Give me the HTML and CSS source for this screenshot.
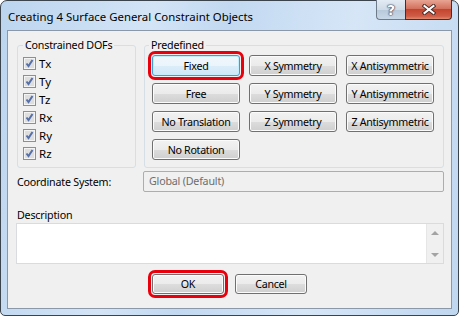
FILE: index.html
```html
<!DOCTYPE html>
<html lang="en">
<head>
  <meta charset="UTF-8" />
  <title>Creating 4 Surface General Constraint Objects</title>
  <link rel="stylesheet" href="styles.css">
</head>
<body>
  <div class="window">
    <div class="titlebar">
      <span class="title">Creating 4 Surface General Constraint Objects</span>
      <div class="caption">
        <span class="cap-btn help">?</span>
        <span class="cap-btn close">
          <svg width="14" height="11" viewBox="0 0 14 11">
            <path d="M2.5 2 L11.5 9 M11.5 2 L2.5 9" stroke="#4a2b28" stroke-width="4" stroke-linecap="square" />
            <path d="M2.5 2 L11.5 9 M11.5 2 L2.5 9" stroke="#fff" stroke-width="2" stroke-linecap="square" />
          </svg>
        </span>
      </div>
    </div>

    <div class="client">
      <div class="groups">
        <fieldset class="group dofs">
          <legend>Constrained DOFs</legend>
          <div class="dof-list">
            <label class="check"><span class="box"></span>Tx</label>
            <label class="check"><span class="box"></span>Ty</label>
            <label class="check"><span class="box"></span>Tz</label>
            <label class="check"><span class="box"></span>Rx</label>
            <label class="check"><span class="box"></span>Ry</label>
            <label class="check"><span class="box"></span>Rz</label>
          </div>
        </fieldset>

        <fieldset class="group predefined">
          <legend>Predefined</legend>
          <div class="btn-grid">
            <button class="btn focused marked">Fixed</button>
            <button class="btn">X Symmetry</button>
            <button class="btn">X Antisymmetric</button>
            <button class="btn">Free</button>
            <button class="btn">Y Symmetry</button>
            <button class="btn">Y Antisymmetric</button>
            <button class="btn">No Translation</button>
            <button class="btn">Z Symmetry</button>
            <button class="btn">Z Antisymmetric</button>
            <button class="btn">No Rotation</button>
          </div>
        </fieldset>
      </div>

      <div class="field-row">
        <span class="field-label">Coordinate System:</span>
        <div class="combo">Global (Default)</div>
      </div>

      <div class="desc-label">Description</div>
      <div class="memo">
        <div class="memo-text"></div>
        <div class="scrollbar">
          <span class="arrow up"></span>
          <span class="arrow down"></span>
        </div>
      </div>

      <div class="actions">
        <button class="btn action marked">OK</button>
        <button class="btn action">Cancel</button>
      </div>
    </div>
  </div>
</body>
</html>
```

FILE: styles.css
```css
* {
  box-sizing: border-box;
}

body {
  margin: 0;
  background: #ffffff;
  font-family: 'Noto Sans', sans-serif;
  font-size: 10.7px;
  color: #000;
}

.window {
  width: 459px;
  height: 316px;
  border: 1px solid #3b434c;
  border-radius: 7px 7px 5px 5px;
  background: linear-gradient(100deg, #bcd5ef 0%, #d3e4f6 30%, #c2d9f1 45%, #d6e6f7 70%, #c0d7f0 100%);
  padding: 0 6px 6px 6px;
  display: flex;
  flex-direction: column;
}

.titlebar {
  height: 29px;
  display: flex;
  justify-content: space-between;
  align-items: flex-start;
}

.title {
  padding: 9px 0 0 1px;
  font-size: 11.4px;
  line-height: 14px;
  color: #000;
}

.caption {
  display: flex;
  margin-top: -1px;
}

.cap-btn {
  height: 20px;
  display: flex;
  align-items: center;
  justify-content: center;
  border: 1px solid #6f7a88;
  border-top: none;
}

.help {
  width: 29px;
  border-radius: 0 0 0 4px;
  border-right: none;
  background: linear-gradient(#e3ebf4 0%, #cfdbe8 50%, #b7c8da 51%, #c9d8e8 100%);
  color: #ffffff;
  font-family: 'DejaVu Sans', sans-serif;
  font-weight: bold;
  font-size: 14px;
  text-shadow: 0 0 1px #2d3c50, 0 0 1px #2d3c50, 0 0 2px #2d3c50;
}

.close {
  width: 47px;
  border-radius: 0 0 4px 0;
  border-color: #4c2a26;
  background: linear-gradient(#e8a493 0%, #d4715d 45%, #c3452f 50%, #cf5c45 85%, #e08b6f 100%);
}

.client {
  flex: 1;
  background: #f0f0f0;
  border: 1px solid #8a98a9;
  padding: 7px 7px 0 9px;
  letter-spacing: -0.2px;
}

.groups {
  display: flex;
  gap: 8px;
}

.group {
  margin: 0;
  padding: 0;
  border: 1px solid #d5dfe5;
  border-radius: 3px;
  min-width: 0;
}

.group legend {
  padding: 0 2px;
  margin-left: 5px;
  line-height: 15px;
}

.dofs {
  width: 119px;
}

.dof-list {
  padding: 1px 0 0 5px;
}

.predefined {
  width: 300px;
}

.predefined legend {
  margin-left: 4px;
}

.check {
  display: flex;
  align-items: center;
  height: 18px;
  gap: 3px;
  font-size: 11.5px;
  letter-spacing: 0;
}

.box {
  width: 13px;
  height: 13px;
  border: 1px solid #8f8f8f;
  background: #dedede url("data:image/svg+xml;utf8,<svg xmlns='http://www.w3.org/2000/svg' width='11' height='11'><path d='M2.5 5.5 L4.5 8 L8.5 2' fill='none' stroke='%23556fa8' stroke-width='2'/></svg>") no-repeat center;
  box-shadow: inset 0 0 0 1px #f4f4f4;
}

.btn-grid {
  display: grid;
  grid-template-columns: repeat(3, 88px);
  column-gap: 9px;
  row-gap: 7px;
  padding: 2px 7px 7px 7px;
}

.btn {
  height: 21px;
  padding: 0;
  white-space: nowrap;
  font-family: inherit;
  font-size: 10.7px;
  letter-spacing: -0.3px;
  color: #000;
  border: 1px solid #707070;
  border-radius: 3px;
  background: linear-gradient(#f2f2f2 0%, #ebebeb 50%, #dddddd 51%, #cfcfcf 100%);
  box-shadow: inset 0 0 0 1px #fbfbfb;
}

.btn.focused {
  border-color: #3c9ed6;
  box-shadow: inset 0 0 0 1px #c3ecfc;
  background: linear-gradient(#f2f8fc 0%, #eaf4fb 50%, #dbedf9 51%, #d0e7f7 100%);
}

.marked {
  outline: 3px solid #e8000c;
  outline-offset: 1px;
}

.field-row {
  display: flex;
  align-items: center;
  justify-content: space-between;
  margin-top: 3px;
}

.combo {
  width: 301px;
  height: 21px;
  border: 1px solid #adadad;
  border-radius: 2px;
  padding: 0 5px;
  line-height: 19px;
  color: #6d6d6d;
  background: #f0f0f0;
}

.desc-label {
  margin-top: 15px;
  line-height: 16px;
}

.memo {
  margin: 0 0 0 -1px;
  width: 428px;
  height: 41px;
  border: 1px solid #d9dbdf;
  background: #ffffff;
  display: flex;
}

.memo-text {
  flex: 1;
}

.scrollbar {
  width: 17px;
  background: #f0f0f0;
  border-left: 1px solid #e6e6e6;
  display: flex;
  flex-direction: column;
  justify-content: space-between;
  align-items: center;
  padding: 7px 0 6px;
}

.arrow {
  width: 0;
  height: 0;
  border-left: 4px solid transparent;
  border-right: 4px solid transparent;
}

.arrow.up {
  border-bottom: 4px solid #a3a3a3;
}

.arrow.down {
  border-top: 4px solid #a3a3a3;
}

.actions {
  display: flex;
  justify-content: center;
  gap: 11px;
  margin: 10px 0 0 -2px;
}

.btn.action {
  width: 72px;
  height: 20px;
}
```
